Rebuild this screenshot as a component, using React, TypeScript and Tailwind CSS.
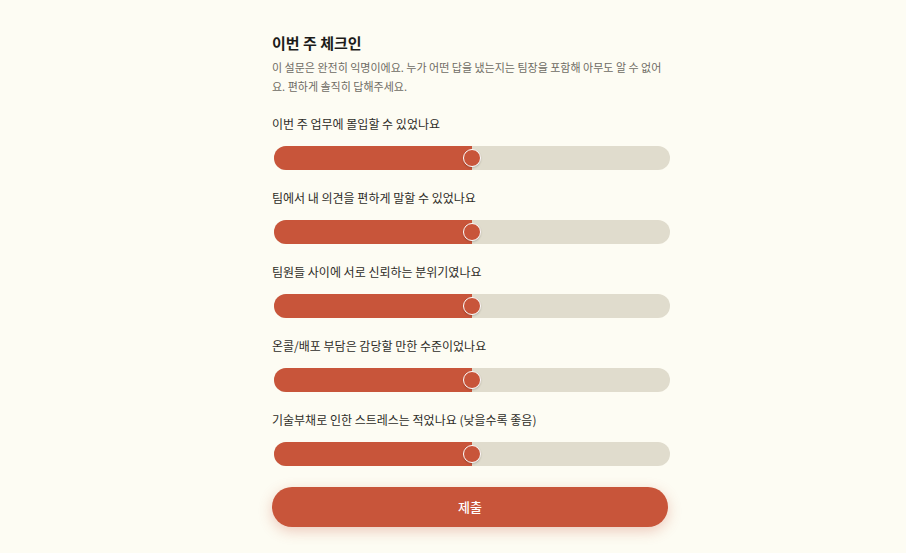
import React from "react";

const questions = [
  "이번 주 업무에 몰입할 수 있었나요",
  "팀에서 내 의견을 편하게 말할 수 있었나요",
  "팀원들 사이에 서로 신뢰하는 분위기였나요",
  "온콜/배포 부담은 감당할 만한 수준이었나요",
  "기술부채로 인한 스트레스는 적었나요 (낮을수록 좋음)",
];

function Slider() {
  return (
    <div className="relative ml-[2px] h-6 w-full">
      <div className="absolute inset-0 overflow-hidden rounded-full bg-[#e0dccd]">
        <div className="h-full w-1/2 bg-[#c8553a]" />
      </div>
      <div className="absolute left-1/2 top-1/2 h-[18px] w-[18px] -translate-x-1/2 -translate-y-1/2 rounded-full border border-white bg-[#c8553a] shadow-[0_1px_2px_rgba(0,0,0,0.2)]" />
    </div>
  );
}

export default function App() {
  return (
    <div
      className="min-h-[553px] w-full bg-[#fdfcf3] pl-[272px]"
      style={{ fontFamily: '"Noto Sans CJK KR", "Noto Sans", sans-serif' }}
    >
      <div className="w-[396px] pt-[31px] pb-[26px]">
        <h1 className="text-[15px] font-bold leading-6 text-[#1c1b19]">이번 주 체크인</h1>
        <p className="mt-[3px] text-[11px] leading-[19px] text-[#6e6b63]">
          이 설문은 완전히 익명이에요. 누가 어떤 답을 냈는지는 팀장을 포함해 아무도 알 수 없어요. 편하게 솔직히 답해주세요.
        </p>
        <div className="mt-[18px] flex flex-col gap-[18px]">
          {questions.map((q) => (
            <div key={q} className="flex flex-col gap-3">
              <div className="text-[12px] leading-5 text-[#2e2c28]">{q}</div>
              <Slider />
            </div>
          ))}
        </div>
        <button className="mt-[21px] h-10 w-full rounded-full bg-[#c8553a] text-[13px] font-medium text-white shadow-[0_4px_14px_rgba(200,85,58,0.3)]">
          제출
        </button>
      </div>
    </div>
  );
}
